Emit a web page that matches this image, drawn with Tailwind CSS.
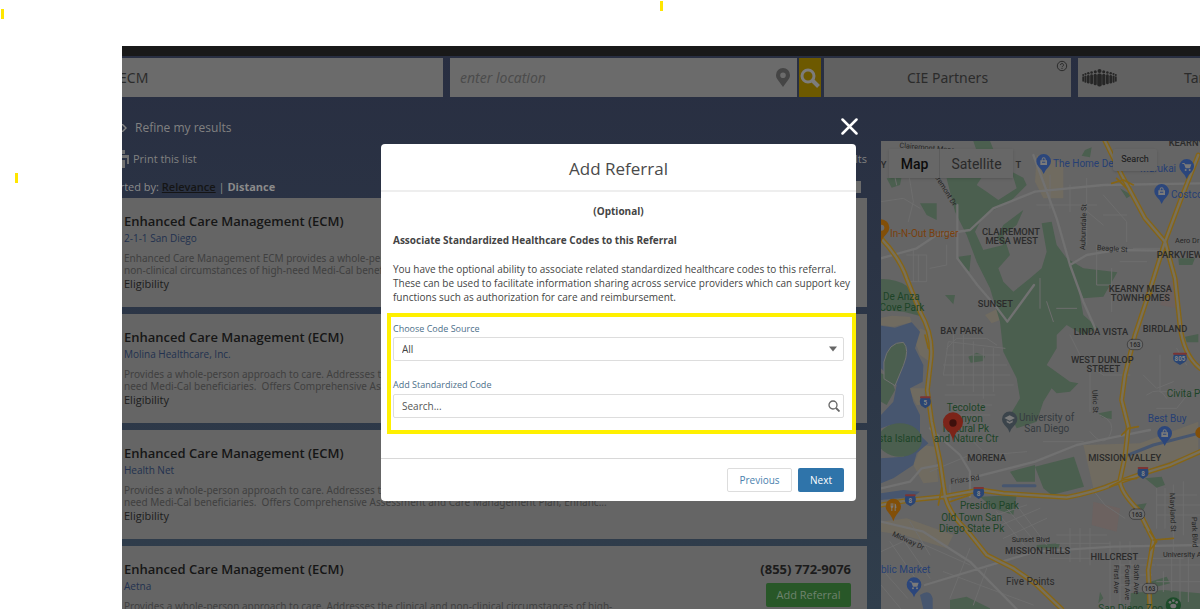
<!DOCTYPE html>
<html lang="en">
<head>
    <meta charset="UTF-8">
    <meta name="viewport" content="width=device-width, initial-scale=1.0">
    <title>Add Referral</title>
    <script src="https://cdn.jsdelivr.net/npm/@tailwindcss/browser@4"></script>
</head>
<body class="relative h-screen overflow-hidden bg-white font-['Open_Sans','Noto_Sans',sans-serif] antialiased">
    <!-- Highlighter marks -->
    <span class="absolute left-px top-[9px] h-[10px] w-[3px] bg-[#ffe600]"></span>
    <span class="absolute left-[15px] top-[173px] h-[10px] w-[3px] bg-[#ffe600]"></span>
    <span class="absolute left-[660px] top-px h-[10px] w-[3px] bg-[#ffe600]"></span>

    <div class="h-full pl-[122px] pt-[46px]">
        <div class="flex h-full flex-col overflow-hidden bg-linear-to-b from-[#282e41] to-[#303e4c]">
            <div class="h-[10px] shrink-0 bg-[#191919]"></div>

            <!-- Search bar -->
            <form class="mt-[2px] flex h-[39px] shrink-0 text-sm text-[#2b2b2b]">
                <input type="text" value="ECM" aria-label="Search term" class="w-0 flex-[321] bg-[#6b6b6b] font-['Noto_Sans',sans-serif] -indent-[3px] outline-none">
                <div class="ml-[7px] flex flex-[347] items-center bg-[#6b6b6b]">
                    <input type="text" placeholder="enter location" aria-label="Location" class="w-0 flex-1 bg-transparent px-[10px] font-['Noto_Sans',sans-serif] italic outline-none placeholder:text-[#4c4c4c]">
                    <svg class="mr-[7px] h-[19px] w-[14px]" viewBox="0 0 14 19" fill="#454545"><path fill-rule="evenodd" d="M7 0a7 7 0 0 0-7 7c0 2 .6 3 1.400 4.200L7 19l5.600-7.800C13.400 10 14 9 14 7a7 7 0 0 0-7-7Zm0 4.500a2.800 2.800 0 1 1 0 5.600 2.800 2.800 0 0 1 0-5.600Z"/></svg>
                </div>
                <button type="submit" aria-label="Search" class="ml-[2px] flex w-[22px] items-center justify-center bg-[#6d5900]">
                    <svg class="size-5" viewBox="0 0 20 20" fill="none" stroke="#7c7c7c" stroke-width="3"><circle cx="8" cy="8" r="6"/><path d="m12.500 12.500 6 6" stroke-width="4"/></svg>
                </button>
                <button type="button" class="relative ml-[3px] flex-[247] bg-[#616161] font-['Noto_Sans',sans-serif]">
                    CIE Partners
                    <svg class="absolute right-[3px] top-[2px] size-3" viewBox="0 0 12 12" fill="none" stroke="#2b2b2b"><circle cx="6" cy="6" r="4.700"/><path d="M4.500 5a1.500 1.500 0 1 1 2.200 1.300Q6 6.600 6 7.200M6 8v1"/></svg>
                </button>
                <button type="button" class="ml-[7px] flex flex-[122] items-center justify-between overflow-hidden bg-[#616161] font-['Noto_Sans',sans-serif]">
                    <svg class="ml-1 h-[18px] w-[35px] shrink-0" viewBox="0 0 35 18" fill="#262626">
                        <circle cx="17.500" cy="2" r="2"/><rect x="15.200" y="4.500" width="4.600" height="13" rx="2"/>
                        <circle cx="13.300" cy="2.800" r="1.500"/><rect x="11.600" y="4.800" width="3.200" height="11.500" rx="1.500"/>
                        <circle cx="21.700" cy="2.800" r="1.500"/><rect x="20.200" y="4.800" width="3.200" height="11.500" rx="1.500"/>
                        <circle cx="9.600" cy="3.500" r="1.300"/><rect x="8.200" y="5.300" width="2.800" height="10" rx="1.400"/>
                        <circle cx="25.400" cy="3.500" r="1.300"/><rect x="24" y="5.300" width="2.800" height="10" rx="1.400"/>
                        <circle cx="6.300" cy="4.200" r="1.200"/><rect x="5" y="5.900" width="2.600" height="8.700" rx="1.300"/>
                        <circle cx="28.700" cy="4.200" r="1.200"/><rect x="27.400" y="5.900" width="2.600" height="8.700" rx="1.300"/>
                        <circle cx="3.500" cy="5" r="1.100"/><rect x="2.400" y="6.500" width="2.100" height="7.300" rx="1"/>
                        <circle cx="31.500" cy="5" r="1.100"/><rect x="30.500" y="6.500" width="2.100" height="7.300" rx="1"/>
                        <circle cx="1.200" cy="6" r="1"/><rect x=".3" y="7.300" width="1.700" height="5.500" rx=".8"/>
                        <circle cx="33.800" cy="6" r="1"/><rect x="33" y="7.300" width="1.700" height="5.500" rx=".8"/>
                    </svg>
                    <span class="w-4 whitespace-nowrap">Target</span>
                </button>
            </form>

            <div class="grid flex-1 grid-cols-[745fr_319fr] gap-[14px] overflow-hidden">
                <!-- Results -->
                <div class="min-w-0 overflow-hidden">
                    <button type="button" class="mt-[21px] flex h-5 items-center gap-2 text-xs text-[#818181]">
                        <svg class="h-2 w-[5px]" viewBox="0 0 5 8" fill="none" stroke="#818181" stroke-width="1.500"><path d="m0 0 4 4-4 4"/></svg>
                        Refine my results
                    </button>
                    <div class="mt-[11px] flex h-5 items-center justify-between text-[11px] text-[#818181]">
                        <button type="button" class="flex items-center gap-1">
                            <svg class="h-[18px] w-[7px]" viewBox="0 0 7 18" fill="#707070"><path d="M0 0h3v4H0zM0 5h7v9H5V8H0zM0 10h3v8H0z"/></svg>
                            Print this list
                        </button>
                        <span>464 results</span>
                    </div>
                    <div class="mt-2 flex h-5 items-center justify-between pr-[6px] text-[11px] text-[#8b8b8b]">
                        <p class="-ml-[15px]">Sorted by: <a href="#" class="font-semibold text-[#151515] underline">Relevance</a> | <a href="#" class="font-bold">Distance</a></p>
                        <span class="h-3 w-3 bg-[#6b6b6b]"></span>
                    </div>

                    <div class="mt-px flex flex-col gap-[7px] text-[10px]">
                        <article class="h-[109px] shrink-0 bg-[#656565] px-[2px] pt-[13px]">
                            <h2 class="text-[13px]/5 font-semibold text-[#161616]">Enhanced Care Management (ECM)</h2>
                            <a href="#" class="block leading-[14px] text-[#22314f]">2-1-1 San Diego</a>
                            <p class="mt-[7px] whitespace-nowrap font-['Noto_Sans',sans-serif] leading-[12px] text-[#404040]">Enhanced Care Management ECM provides a whole-person approach to the clinical and<br>non-clinical circumstances of high-need Medi-Cal beneficiaries.</p>
                            <p class="text-[11px]/4 font-medium text-[#1c1c1c]">Eligibility</p>
                        </article>
                        <article class="h-[109px] shrink-0 bg-[#656565] px-[2px] pt-[13px]">
                            <h2 class="text-[13px]/5 font-semibold text-[#161616]">Enhanced Care Management (ECM)</h2>
                            <a href="#" class="block leading-[14px] text-[#22314f]">Molina Healthcare, Inc.</a>
                            <p class="mt-[7px] whitespace-nowrap font-['Noto_Sans',sans-serif] leading-[12px] text-[#404040]">Provides a whole-person approach to care. Addresses the clinical and<br>need Medi-Cal beneficiaries.&nbsp; Offers Comprehensive Assessment</p>
                            <p class="text-[11px]/4 font-medium text-[#1c1c1c]">Eligibility</p>
                        </article>
                        <article class="h-[109px] shrink-0 bg-[#656565] px-[2px] pt-[13px]">
                            <h2 class="text-[13px]/5 font-semibold text-[#161616]">Enhanced Care Management (ECM)</h2>
                            <a href="#" class="block leading-[14px] text-[#22314f]">Health Net</a>
                            <p class="mt-[7px] whitespace-nowrap font-['Noto_Sans',sans-serif] leading-[12px] text-[#404040]">Provides a whole-person approach to care. Addresses the clinical and<br>need Medi-Cal beneficiaries.&nbsp; Offers Comprehensive Assessment and Care Management Plan, Enhanc...</p>
                            <p class="text-[11px]/4 font-medium text-[#1c1c1c]">Eligibility</p>
                        </article>
                        <article class="flex h-[109px] shrink-0 justify-between bg-[#656565] pl-[2px] pr-4 pt-[13px]">
                            <div>
                                <h2 class="text-[13px]/5 font-semibold text-[#161616]">Enhanced Care Management (ECM)</h2>
                                <a href="#" class="block leading-[14px] text-[#22314f]">Aetna</a>
                                <p class="mt-[7px] whitespace-nowrap font-['Noto_Sans',sans-serif] leading-[12px] text-[#404040]">Provides a whole-person approach to care. Addresses the clinical and non-clinical circumstances of high-</p>
                            </div>
                            <div class="flex flex-col items-end gap-1">
                                <span class="text-[13px]/5 font-bold text-[#1c1c1c]">(855) 772-9076</span>
                                <button type="button" class="h-6 w-[85px] rounded-xs bg-[#285728] text-[11px] text-[#6f836f]">Add Referral</button>
                            </div>
                        </article>
                    </div>
                </div>

                <!-- Map -->
                <div class="relative mt-[44px] overflow-hidden bg-[#656565] font-[Roboto,sans-serif]">
                    <svg class="h-full w-full" viewBox="33 18 957 1404" preserveAspectRatio="xMinYMin slice" fill="none" stroke-linejoin="round" stroke-linecap="round">
                        <!-- Sand and hospital tints -->
                        <g fill="#706b60">
                            <path d="M33 548 65 542 120 545 125 562 70 575 33 570ZM150 580 175 590 178 680 150 660 135 620ZM115 760 165 760 160 810 140 810ZM155 930 195 935 205 1040 160 1045 130 990ZM500 60 580 85 580 190 520 190 495 140ZM640 930 810 925 985 860 985 950 760 1030 670 1060ZM33 1160 110 1150 250 1200 230 1240 100 1200 33 1190ZM345 540 385 520 390 555 365 565Z"/>
                            <path d="M900 440 930 430 920 520 870 510ZM670 1100 750 1120 740 1190 665 1170Z" fill="#6c6260"/>
                        </g>
                        <!-- Parks -->
                        <g fill="#4b5f4f">
                            <path d="M225 110 340 120 320 150 350 170 385 195 440 160 425 110 460 128 470 150 420 200 360 230 330 260 315 290 340 345 400 330 380 310 400 270 460 225 440 270 400 300 420 360 385 400 400 440 430 470 480 430 515 400 530 350 515 265 545 260 560 330 590 370 640 400 742 412 700 485 640 490 625 460 640 540 685 580 640 600 590 570 560 600 560 640 530 690 600 740 625 745 600 770 560 775 545 760 520 800 500 860 440 880 420 840 450 790 440 730 400 650 390 560 360 460 320 380 290 300 255 230Z"/>
                            <path d="M310 18h50l10 25-30 30h-40l20-25ZM150 205h50v50l-30-15ZM50 130l45-5-5 25-25 8ZM265 365l38-5-5 50-28-30ZM225 480h30l-5 28ZM295 665l25-12 25 10-5 15-38 5ZM645 45l20-8-5 30-25-5ZM750 160l35 20-15 10ZM925 370h50l-8 20h-40ZM945 605l40-8v25h-35ZM685 835l40-8v25l-30-5Z"/>
                            <path d="M33 432Q120 430 155 510L160 545 100 530 33 525ZM33 715 60 725 75 765 50 810 33 800ZM420 1010 495 990 495 1040 440 1040ZM495 995 612 965 642 1055 545 1080 520 1060ZM330 1085 440 1080 430 1140 370 1120ZM825 1030l50-5 10 25-25 8ZM795 1110l35-5-10 20ZM820 1175l15-5v20ZM240 1395l50-10 70 35v10H240ZM780 1375l100-10 110 10v47H780ZM840 1340l50-15 10 20-40 10ZM690 1370l10 20-15 15ZM500 1230l70-5-5 15h-65Z"/>
                        </g>
                        <!-- Water -->
                        <g fill="#47566f">
                            <path d="M33 572 75 578 125 562 150 590 135 640 160 690 158 740 120 760 130 800 150 840 150 900 175 925 140 955 130 990 70 1030 33 1045 33 970 100 965 150 930 110 870 60 870 33 880 33 840 70 800 80 750 33 700Z"/>
                            <path d="M33 1075 100 1065 150 1070 130 1085 33 1095ZM150 1380q30-20 38 10v32h-28Z"/>
                        </g>
                        <path d="M400 1052h95M775 960l75-30 135-35" stroke="#47566f" stroke-width="9"/>
                        <g fill="#4b5f4f">
                            <path d="M42 680Q55 620 100 622q20 20 0 70l-25 60-32-20Z" stroke="#717171" stroke-width="3"/>
                            <ellipse cx="90" cy="915" rx="66" ry="50"/>
                        </g>
                        <!-- Streets -->
                        <g stroke="#6e6e6e" stroke-width="3">
                            <path d="M33 200 100 190 150 220M100 18 130 200 115 260M180 100 260 90M110 360h60v80h-60M130 340v100M145 360v80M180 400l50-10v-60M60 60 80 150M200 70l20 50M230 640l30-30h90l30 20M220 720l15-100 170 20M250 600v150M280 600v150M310 620v150M340 640v150M370 640v130M230 660h160M220 690h190M220 720h200M230 750h200M225 780h150M235 810h130M240 840h120"/>
                            <path d="M500 210h180M540 120v100M600 150v80M650 130v200M700 180l70 80v60M700 240h70M680 330v120h40M790 340h80M725 400v130M750 380h80M640 220l60 50M740 450l90 40M510 430v90M530 500l20 60M560 520h60M600 600l40 80 60 40M660 700v130M700 720h80M690 840q50 20 30 60t-60-10M820 720l40 40 50-20M870 660v110h110M860 820h60l40-50M830 780q40-30 60 10M920 640l30 50M520 920h120"/>
                            <path d="M240 1050v60M180 1010 300 960M290 900l60 60 120-10M33 1250 120 1210 300 1290M60 1220l90 130M90 1200l90 130M33 1300l80 90M33 1350l60 72M120 1160l60 100M380 1130l90 110M410 1120l85 100M440 1110l90 120M350 1150l120-40M370 1180l140-60M400 1210l130-60M220 1310l270 100M300 1240l-60 150M350 1300l-40 110"/>
                            <path d="M600 1180v100M630 1180v100M660 1180v110M560 1200h150M560 1225h160M540 1270h400M720 1220v202M750 1220v202M780 1220v180M735 1290h120M735 1320h110M735 1350h100M860 1060v120M885 1060v120M910 1050v200M940 1040v160M860 1080h120M860 1110h130M860 1140h130M880 1310v60M905 1260v110M930 1260v140M955 1260v140M860 1290h130M860 1340h130M665 1060l40 50 60 40"/>
                        </g>
                        <g stroke="#717171" stroke-width="7">
                            <path d="M33 370 140 340 200 300 300 285 370 220 495 170 700 150 990 145M262 210v160l60 80 60 70 30 40 80-110M490 60 560 250 600 390 640 500 680 590M600 390 650 360 740 345 880 347M180 880 270 960 300 1010 300 1085M33 1060 120 1040 155 1000 210 990M260 1040 495 980 620 930 740 905 840 885M33 1160 160 1190 300 1280 440 1422M165 1350 495 1250 730 1235 990 1230"/>
                        </g>
                        <!-- Freeways -->
                        <g stroke="#866515" stroke-width="15">
                            <path d="M33 310Q90 370 110 430L150 530Q190 600 183 670L172 765 185 860 210 980 225 1085Q240 1140 290 1185L350 1260 430 1300 495 1345 575 1422"/>
                            <path d="M33 1110 120 1095 220 1085 330 1065 400 1075 590 1087Q680 1070 735 1045L820 1015 900 990 990 950"/>
                            <path d="M985 60 930 200 885 320 835 480 795 600 765 720 755 795 775 875 765 965 750 1035Q750 1070 805 1125L850 1215 835 1305 840 1422"/>
                            <path d="M705 18 755 120 825 250 885 320 915 430 930 570Q940 660 990 700"/>
                        </g>
                        <g stroke="#77705c" stroke-width="7">
                            <path d="M33 310Q90 370 110 430L150 530Q190 600 183 670L172 765 185 860 210 980 225 1085Q240 1140 290 1185L350 1260 430 1300 495 1345 575 1422"/>
                            <path d="M33 1110 120 1095 220 1085 330 1065 400 1075 590 1087Q680 1070 735 1045L820 1015 900 990 990 950"/>
                            <path d="M985 60 930 200 885 320 835 480 795 600 765 720 755 795 775 875 765 965 750 1035Q750 1070 805 1125L850 1215 835 1305 840 1422"/>
                            <path d="M705 18 755 120 825 250 885 320 915 430 930 570Q940 660 990 700"/>
                        </g>
                        <path d="M725 145 760 135 790 150M740 130l30 30M755 900l20-20 30-5M215 1060l-10 50M240 1100l60-20M720 1055l40-20 40-5M850 1215l60-5M840 1190l20 30-20 25M165 600l10 40M825 490l20-15" stroke="#866515" stroke-width="5"/>

                        <!-- Route shields -->
                        <g font-size="19" font-weight="700" text-anchor="middle" fill="#858585">
                            <path fill="#2a4573" d="M152 788h28q6 16-2 24l-12 8-12-8q-8-8-2-24ZM107 1082h28q6 16-2 24l-12 8-12-8q-8-8-2-24ZM312 1060h28q6 16-2 24l-12 8-12-8q-8-8-2-24ZM805 1000h28q6 16-2 24l-12 8-12-8q-8-8-2-24ZM912 658h36q6 16-2 22l-16 10-16-10q-8-6-2-22Z"/>
                            <path d="M153 787h26M108 1081h26M313 1059h26M806 999h26M912 656h36" stroke="#7b3434" stroke-width="6"/>
                            <text x="166" y="811">5</text><text x="121" y="1105">8</text><text x="326" y="1083">8</text><text x="819" y="1023">8</text><text x="930" y="679">805</text>
                            <g fill="#6c6c6c" stroke="#303030" stroke-width="2"><rect x="772" y="613" width="46" height="31" rx="14"/><rect x="778" y="1122" width="46" height="31" rx="14"/><rect x="817" y="1345" width="46" height="31" rx="14"/></g>
                            <g fill="#262626" font-weight="500"><text x="795" y="636">163</text><text x="801" y="1145">163</text><text x="840" y="1368">163</text></g>
                        </g>

                        <!-- Area names -->
                        <g font-size="28" font-weight="500" fill="#2b2b2b" text-anchor="middle">
                            <text x="423" y="300">CLAIREMONT</text><text x="425" y="327">MESA WEST</text>
                            <text x="376" y="516">SUNSET</text><text x="275" y="596">BAY PARK</text>
                            <text x="811" y="472">KEARNY MESA</text><text x="811" y="499">TOWNHOMES</text>
                            <text x="693" y="601">LINDA VISTA</text><text x="885" y="590">BIRDLAND</text>
                            <text x="697" y="684">WEST DUNLOP</text><text x="700" y="711">STREET</text>
                            <text x="350" y="979">MORENA</text><text x="764" y="979">MISSION VALLEY</text>
                            <text x="503" y="1258">MISSION HILLS</text><text x="733" y="1276">HILLCREST</text>
                            <text x="860" y="368" text-anchor="start">PARKVIEW</text><text x="896" y="34" text-anchor="start">KEARNY</text>
                            <text x="41" y="99">Y</text><text x="445" y="99">T</text>
                            <text x="481" y="1351" font-size="30" font-weight="400">Five Points</text>
                        </g>
                        <!-- Park names -->
                        <g font-size="30" fill="#1d4427" text-anchor="middle">
                            <text x="94" y="496">De Anza</text><text x="96" y="527">Cove Park</text>
                            <text x="288" y="829">Tecolote</text><text x="288" y="860">Canyon</text><text x="288" y="891">Natural Pk</text><text x="288" y="922">and Nature Ctr</text>
                            <text x="90" y="922">sta Island</text><text x="358" y="1123">Presidio Park</text>
                            <text x="305" y="1159">Old Town San</text><text x="305" y="1190">Diego State Pk</text>
                            <text x="890" y="787" text-anchor="start">Civita Park</text><text x="782" y="1431">San Diego Zoo</text>
                        </g>
                        <!-- Businesses -->
                        <g font-size="30" fill="#263f74">
                            <text x="549" y="97">The Home Depot</text><text x="810" y="112">Marukai</text><text x="903" y="189">Costco</text>
                            <text x="833" y="860">Best Buy</text><text x="33" y="1315">blic Market</text>
                        </g>
                        <text x="60" y="305" font-size="30" fill="#7a3f0c">In-N-Out Burger</text>
                        <g font-size="30" fill="#353b40"><text x="447" y="859">University of</text><text x="463" y="891">San Diego</text></g>
                        <!-- Street names -->
                        <g font-size="22" fill="#262626">
                            <text transform="translate(645 345) rotate(-88)">Auburndale St</text><text transform="translate(680 345) rotate(4)">Beagle St</text><text x="915" y="323">Aero Dr</text>
                            <text transform="translate(88 38) rotate(5)">Clairemont Mesa</text><text transform="translate(195 128) rotate(58)">iremont Dr</text>
                            <text transform="translate(243 1047) rotate(-8)">Friars Rd</text><text transform="translate(65 1202) rotate(25)">Midway Dr</text><text x="425" y="1222">Sunset Blvd</text>
                            <text transform="translate(667 765) rotate(88)">Ulric St</text><text transform="translate(899 1074) rotate(88)">Maryland St</text><text transform="translate(965 1146) rotate(88)">Park Blvd</text>
                            <text x="879" y="1266">University Ave</text><text transform="translate(733 1290) rotate(90)">First Ave</text><text transform="translate(765 1290) rotate(90)">Fourth Ave</text><text transform="translate(792 1288) rotate(90)">Sixth Ave</text>
                        </g>

                        <!-- Place pins -->
                        <g fill="#2b467c">
                            <path id="pin" d="M521 117Q518 106 506 95a22 22 0 1 1 30 0Q524 106 521 117Z"/>
                            <use href="#pin" x="429" y="15"/><use href="#pin" x="354" y="90"/><use href="#pin" x="363" y="816"/><use href="#pin" x="-389" y="1270"/>
                        </g>
                        <path d="M34 320Q31 308 16 296a25 25 0 1 1 34 0Q37 308 34 320Z" fill="#824f08"/><circle cx="34" cy="278" r="9" fill="#6b6b6b"/>
                        <path d="M70 1159Q67 1147 54 1131a23 23 0 1 1 32 0Q73 1147 70 1159Z" fill="#824f08"/>
                        <path d="M419 893Q416 881 403 869a23 23 0 1 1 32 0Q422 881 419 893Z" fill="#3b444b"/>
                        <circle cx="993" cy="893" r="17" fill="#824f08"/>
                        <circle cx="910" cy="1410" r="23" fill="#1d4c2a"/><g fill="#747474"><circle cx="900" cy="1402" r="4"/><circle cx="910" cy="1397" r="4"/><circle cx="920" cy="1402" r="4"/><ellipse cx="910" cy="1413" rx="9" ry="7"/></g>
                        <g fill="#7a7a7a">
                            <path id="bag" fill-rule="evenodd" d="M511 76h20v14h-20ZM515 76v-3a6 6 0 0 1 12 0v3h-3v-3a3 3 0 0 0-6 0v3ZM516 80v3h10v-3Z"/>
                            <use href="#bag" x="354" y="90"/><use href="#bag" x="363" y="816"/>
                            <path id="cart" d="M937 84h6l3 4h18l-4 12h-13l-5-13h-5ZM947 102a3 3 0 1 1 0 6 3 3 0 0 1 0-6ZM959 102a3 3 0 1 1 0 6 3 3 0 0 1 0-6Z"/>
                            <use href="#cart" x="-818" y="1255"/>
                            <path d="M419 841 435 849 419 857 403 849ZM410 856l9 5 9-5v6l-9 4-9-4ZM62 1105h3v8h2v-8h3v12l-3 2v9h-3v-9l-2-2ZM74 1105q6 2 5 14h-2v9h-3Z"/>
                        </g>
                        <path d="M249 920Q246 895 228 883a30 30 0 1 1 42 0Q252 895 249 920Z" fill="#7c2419"/><circle cx="249" cy="864" r="11" fill="#3d100c"/>
                    </svg>
                    <div class="absolute left-2 top-2 flex h-[29px] bg-[#676767] text-sm shadow-sm">
                        <button type="button" class="w-[51px] border-r border-[#5c5c5c] pl-px font-medium text-[#0c0c0c]">Map</button>
                        <button type="button" class="w-[73px] text-[#2a2a2a]">Satellite</button>
                    </div>
                    <button type="button" class="absolute right-[43px] top-2 h-[22px] w-[44px] rounded-xs bg-[#676767] text-[9px] text-[#161616] shadow-sm">Search</button>
                </div>
            </div>
        </div>
    </div>

    <!-- Add Referral dialog -->
    <div class="absolute inset-x-0 top-[118px] flex flex-col items-center pl-[37px]">
        <div class="flex w-full max-w-[475px] justify-end pb-2">
            <button type="button" aria-label="Close" class="-mr-[2px] mb-px"><svg class="size-[17px]" viewBox="0 0 17 17" fill="none" stroke="#fff" stroke-width="2.500" stroke-linecap="round"><path d="m1.500 1.500 14 14M15.500 1.500l-14 14"/></svg></button>
        </div>
        <section role="dialog" aria-labelledby="dialogTitle" class="w-full max-w-[475px] rounded-sm bg-white text-[10px] text-[#444]">
            <h1 id="dialogTitle" class="h-12 border-b-2 border-[#eee] pt-px text-center text-[17px]/[47px] text-[#4a4a4a]">Add Referral</h1>
            <div class="pb-6 pl-[6px] pt-3">
                <div class="pl-[6px] leading-[14px]">
                    <p class="pr-3 text-center font-bold">(Optional)</p>
                    <p class="mt-[15px] font-bold">Associate Standardized Healthcare Codes to this Referral</p>
                    <p class="mb-[9px] mt-[15px]">You have the optional ability to associate related standardized healthcare codes to this referral.<br>These can be used to facilitate information sharing across service providers which can support key functions such as authorization for care and reimbursement.</p>
                </div>
                <form class="border-4 border-[#fff000] pb-3 pl-[2px] pr-2 pt-[5px]">
                    <label for="codeSource" class="block text-[9px]/[14px] text-[#4c6f8a]">Choose Code Source</label>
                    <div class="relative mt-px">
                        <select id="codeSource" class="block h-6 w-full appearance-none rounded-xs border border-[#ddd] px-2 outline-none">
                            <option>All</option>
                        </select>
                        <svg class="pointer-events-none absolute right-[7px] top-[9px] h-[6px] w-2" viewBox="0 0 8 6" fill="#666"><path d="M0 .5h8l-4 5Z"/></svg>
                    </div>
                    <label for="codeSearch" class="mt-[17px] block text-[9px]/[14px] text-[#4c6f8a]">Add Standardized Code</label>
                    <div class="relative mt-[2px]">
                        <input type="text" id="codeSearch" placeholder="Search..." class="block h-6 w-full rounded-xs border border-[#ddd] px-2 outline-none placeholder:text-[#555]">
                        <svg class="pointer-events-none absolute right-[4px] top-[6px] size-3" viewBox="0 0 12 12" fill="none" stroke="#666" stroke-width="1.300"><circle cx="5" cy="5" r="4"/><path d="m8 8 3.500 3.500" stroke-width="1.800"/></svg>
                    </div>
                </form>
            </div>
            <footer class="flex justify-end gap-[6px] border-t border-[#d8d8d8] px-3 pb-[9px] pt-[9px]">
                <button type="button" class="h-6 w-[65px] rounded-xs border border-[#ddd] text-[#4a7fae]">Previous</button>
                <button type="button" class="h-6 w-[46px] rounded-xs bg-[#2f74aa] text-white">Next</button>
            </footer>
        </section>
    </div>
</body>
</html>
